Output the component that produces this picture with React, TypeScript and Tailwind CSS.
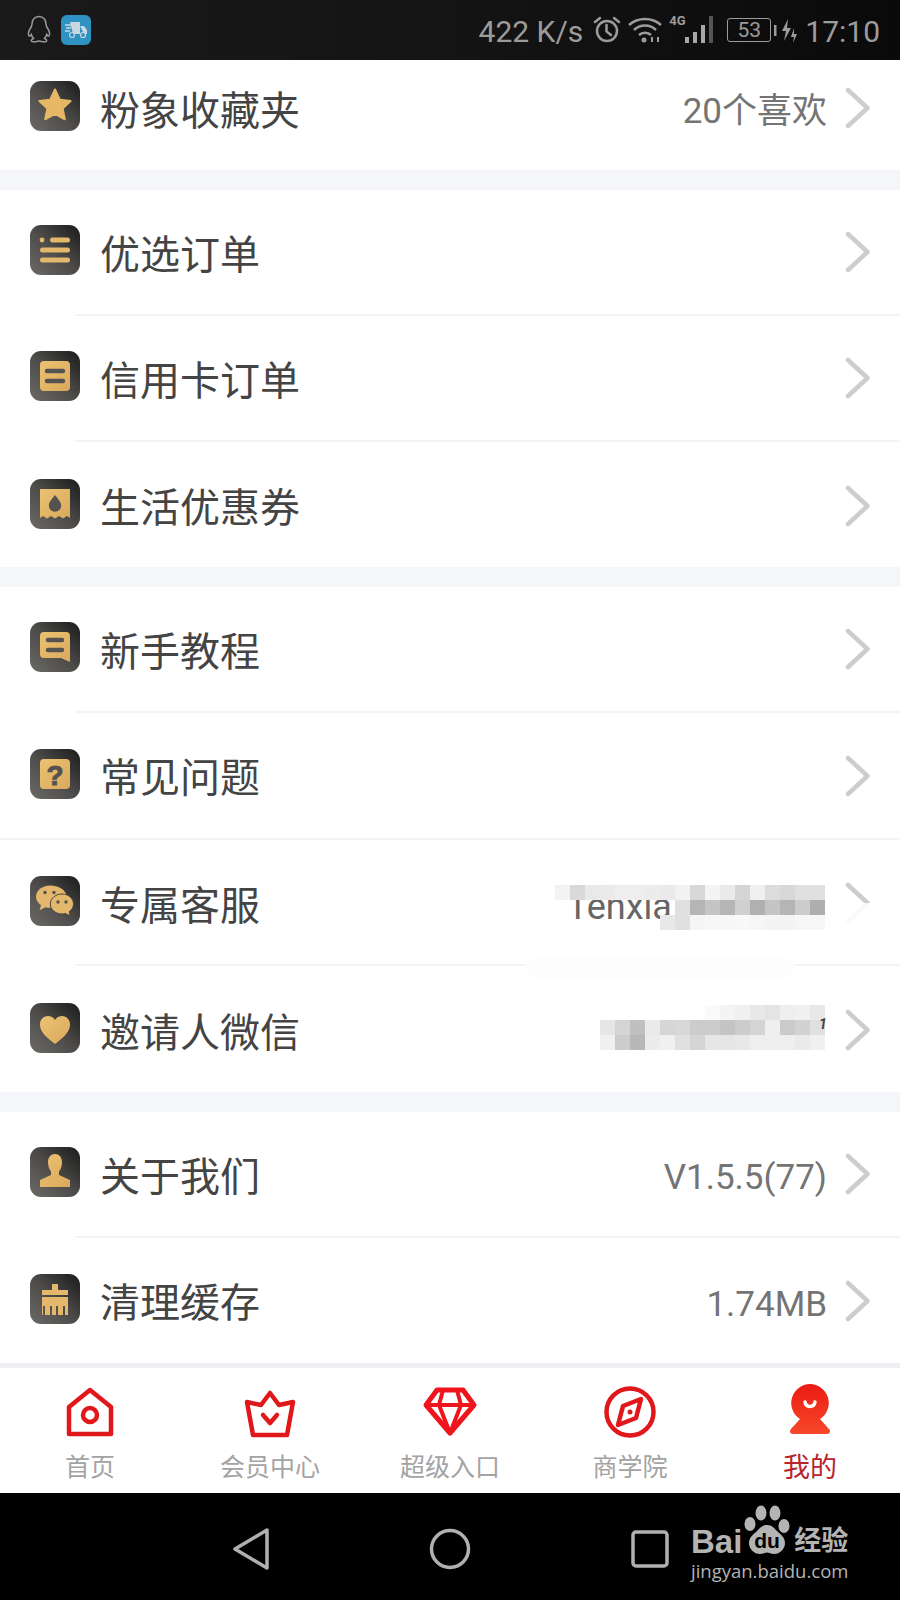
import type { ReactNode } from "react";

const FONT = "[font-family:Roboto,'Noto_Sans_CJK_SC',sans-serif]";
const GOLD = "url(#gold)";
const DARK = "#55534f";

function IconBox({ children }: { children: ReactNode }) {
  return (
    <div className="h-[50px] w-[50px] shrink-0 overflow-hidden rounded-[11px] bg-gradient-to-tr from-[#6b6a66] via-[#4c4b49] to-[#1b1b1b]">
      <svg width="50" height="50" viewBox="0 0 50 50">
        <defs>
          <linearGradient id="gold" x1="0" y1="0" x2="1" y2="1">
            <stop offset="0" stopColor="#ecc272" />
            <stop offset="1" stopColor="#d9a95c" />
          </linearGradient>
        </defs>
        {children}
      </svg>
    </div>
  );
}

const icons: Record<string, ReactNode> = {
  star: (
    <path
      d="M25 8.500l4.800 10.200 10.800 1.300-8 7.400 2.200 10.900-9.800-5.500-9.800 5.500 2.200-10.900-8-7.400 10.800-1.300z"
      fill="#e6b866"
      stroke="#e6b866"
      strokeWidth="2"
      strokeLinejoin="round"
    />
  ),
  list: (
    <g stroke="#e3b76c" strokeWidth="5" strokeLinecap="round">
      <circle cx="12" cy="15" r="2.400" fill="#e3b76c" stroke="none" />
      <path d="M22.500 15H37.500M12.500 25H37.500M12.500 35H37.500" />
    </g>
  ),
  card: (
    <g>
      <rect x="10" y="10" width="30" height="30" rx="4" fill={GOLD} />
      <path d="M17 20H33M17 30H33" stroke={DARK} strokeWidth="4.500" strokeLinecap="round" />
    </g>
  ),
  coupon: (
    <g>
      <path d="M10 10H40V39L37 37 33 39.500 29 37 25 39.500 21 37 17 39.500 13 37 10 39z" fill={GOLD} />
      <path d="M25 16c3 4 6.200 7 6.200 10.500a6.200 6.200 0 0 1-12.400 0C18.800 23 22 20 25 16z" fill={DARK} />
    </g>
  ),
  chat: (
    <g>
      <path d="M14 10H36a4 4 0 0 1 4 4V40L31 36H14a4 4 0 0 1-4-4V14a4 4 0 0 1 4-4z" fill={GOLD} />
      <path d="M18 18H32M18 28H32" stroke={DARK} strokeWidth="4.500" strokeLinecap="round" />
    </g>
  ),
  question: (
    <g>
      <rect x="10" y="10" width="30" height="30" rx="4" fill={GOLD} />
      <text x="25" y="35.500" textAnchor="middle" fontSize="28" fontWeight="700" fill={DARK} stroke={DARK} strokeWidth="1" fontFamily="'Liberation Sans',sans-serif">
        ?
      </text>
    </g>
  ),
  wechat: (
    <g>
      <path d="M20 9.500c-8 0-14 5.200-14 11.200 0 3.600 2 6.500 5 8.500l-1.500 5 6-3c2 .5 4 .8 6 .5L36 18C34 13 28 9.500 20 9.500z" fill="#e3b76c" />
      <circle cx="15" cy="16.500" r="1.700" fill={DARK} />
      <circle cx="24" cy="16.500" r="1.700" fill={DARK} />
      <path d="M32 18c-6.500 0-11.700 4.500-11.700 10s5.200 10 11.700 10c1.500 0 2.500-.2 3.500-.5L40 40l-.7-4.400C42 33.700 43.500 31 43.500 28c0-5.500-5-10-11.500-10z" fill="#e3b76c" stroke="#4a4946" strokeWidth="1" />
      <circle cx="28" cy="26" r="1.700" fill={DARK} />
      <circle cx="36" cy="26" r="1.700" fill={DARK} />
    </g>
  ),
  heart: (
    <path
      d="M25 41C16 34 10 29 10 21.500 10 16 14 13 18 13c3 0 5.500 1.500 7 4 1.500-2.500 4-4 7-4 4 0 8 3 8 8.500C40 29 34 34 25 41z"
      fill={GOLD}
    />
  ),
  user: (
    <path
      d="M18 15c0-5 3-8 7-8s7 3 7 8c0 4-1 7-3 9.500v3.500l11 5v7H10v-7l11-5v-3.500c-2-2.500-3-5.500-3-9.500z"
      fill={GOLD}
    />
  ),
  brush: (
    <g fill="#e3b76c">
      <path d="M22 10H28V16H38V21H12V16H22z" />
      <path d="M12 23H38V41H35V32H33V41H28V32H26V41H22V32H20V41H15V32H13V41H12z" />
    </g>
  ),
};

function Chevron() {
  return (
    <svg width="26" height="42" viewBox="0 0 26 42" className="mt-[4px] shrink-0">
      <path d="M3 3L22.500 21 3 39" fill="none" stroke="#cdcdcd" strokeWidth="4.500" strokeLinecap="round" strokeLinejoin="round" />
    </svg>
  );
}

type RowProps = {
  icon: string;
  title: string;
  value?: string;
  height: number;
  line?: "inset" | "full";
  lift?: number;
  children?: ReactNode;
};

function Row({ icon, title, value, height, line, lift = 3, children }: RowProps) {
  return (
    <div className="relative flex items-center bg-white pr-[29px] pl-[30px]" style={{ height, paddingBottom: lift * 2 }}>
      <IconBox>{icons[icon]}</IconBox>
      <span className="ml-[20px] flex-1 pt-[11px] text-[40px] leading-none text-[#444444]">{title}</span>
      {value && <span className="mr-[18px] pt-[11px] text-[35px] leading-none text-[#747474]">{value}</span>}
      <Chevron />
      {line === "inset" && <div className="absolute right-0 bottom-0 left-[75px] h-[2px] bg-[#f4f4f6]" />}
      {line === "full" && <div className="absolute right-0 bottom-0 left-0 h-[2px] bg-[#f4f4f6]" />}
      {children}
    </div>
  );
}

// "-" leaves the cell clear so the text under it shows through
const blur1 = [
  ["f3", "d9", "e9", "ea", "ee", "ee", "ec", "ea", "f2", "d8", "f4", "ea", "d5", "f0", "dc", "d8", "e0", "e0"],
  ["-", "-", "-", "-", "-", "-", "-", "-", "e0", "b5", "c5", "b5", "d0", "b0", "c5", "b5", "cc", "ae"],
  ["-", "-", "-", "-", "-", "-", "-", "e8", "e0", "f5", "f7", "f7", "f8", "f6", "f4", "f4", "f6", "f6"],
];

const blur2 = [
  ["ff", "ff", "ff", "ff", "ff", "ff", "ff", "fa", "f4", "f0", "e8", "e4", "ee", "f0", "e8"],
  ["e6", "d4", "c0", "ea", "d6", "d8", "cc", "cc", "c4", "cc", "d4", "ee", "ca", "d2", "e0"],
  ["f0", "cc", "b8", "ec", "f0", "e0", "d4", "e6", "e6", "e8", "ee", "ee", "ee", "ea", "f0"],
];

function Mosaic({ rows, className }: { rows: string[][]; className: string }) {
  return (
    <div className={className}>
      {rows.map((row, i) => (
        <div key={i} className="flex">
          {row.map((c, j) => (
            <div key={j} className="h-[15px] w-[15px]" style={{ backgroundColor: c === "-" ? "transparent" : `#${c}${c}${c}` }} />
          ))}
        </div>
      ))}
    </div>
  );
}

function StatusBar() {
  return (
    <div className="flex h-[60px] shrink-0 items-center bg-gradient-to-r from-[#1a1a1a] via-[#141414] to-[#0a0a0a] pr-[20px] pl-[27px] text-[#9c9c9c]">
      <svg width="24" height="30" viewBox="0 0 24 30" fill="none" stroke="#9a9a9a" strokeWidth="1.500">
        <path d="M12 1.500c-4.500 0-7 3.500-7 7.500 0 2-.6 3-2 5-1.500 2.500-2.200 6-1 7 .7.400 1.600-.5 2.300-1.500.4 1.700 1.400 3 2.200 4-1 .4-2.500 1-2.200 2.300.3 1.400 3.700 1.200 5.200.7 1-.4 1.500-.6 2.500-.6s1.500.2 2.500.6c1.500.5 4.900.7 5.200-.7.300-1.300-1.200-1.900-2.200-2.300.8-1 1.800-2.300 2.200-4 .7 1 1.600 1.900 2.300 1.500 1.200-1 .5-4.500-1-7-1.400-2-2-3-2-5 0-4-2.500-7.500-7-7.500z" />
      </svg>
      <div className="ml-[10px] flex h-[30px] w-[30px] items-center justify-center rounded-[6px] bg-[#2f92c2]">
        <svg width="24" height="18" viewBox="0 0 24 18">
          <path d="M6 1H16V13H9M16 5H20L23 9V13H20" fill="#c8d8e0" />
          <path d="M1 4H7M2 7H7M1 10H6" stroke="#c8d8e0" strokeWidth="1.500" />
          <circle cx="8" cy="14" r="2.500" fill="#2f92c2" stroke="#c8d8e0" strokeWidth="1.200" />
          <circle cx="19" cy="14" r="2.500" fill="#2f92c2" stroke="#c8d8e0" strokeWidth="1.200" />
        </svg>
      </div>
      <div className="ml-auto flex items-center">
        <span className="mt-[4px] text-[30px] leading-none [font-family:Roboto,sans-serif]">422 K/s</span>
        <svg width="30" height="30" viewBox="0 0 30 30" className="ml-[9px]" fill="none" stroke="#9c9c9c" strokeWidth="2.500">
          <circle cx="15" cy="16" r="10" />
          <path d="M14.500 10V16.500L19 20M3 7L8 3M27 7L22 3" strokeLinecap="round" />
        </svg>
        <svg width="36" height="28" viewBox="0 0 36 28" className="ml-[5px]" fill="none" stroke="#9c9c9c" strokeWidth="2.500">
          <path d="M2 9C11 1 25 1 34 9M7 14C13 8 23 8 29 14M12 19C15 16 21 16 24 19" />
          <circle cx="17" cy="24" r="2.500" fill="#9c9c9c" stroke="none" />
          <path d="M25 26V21M31 21V26" strokeWidth="2" />
        </svg>
        <div className="relative ml-[6px] h-[30px] w-[46px]">
          <span className="absolute top-[-1px] left-0 text-[13px] leading-none font-bold [font-family:Roboto,sans-serif]">4G</span>
          <svg width="30" height="30" viewBox="0 0 30 30" className="absolute top-0 left-[16px]">
            <rect x="0" y="22" width="4" height="6" fill="#a8a8a8" />
            <rect x="8" y="17" width="4" height="11" fill="#a8a8a8" />
            <rect x="16" y="10" width="4" height="18" fill="#a8a8a8" />
            <rect x="24" y="1" width="4" height="27" fill="#555" />
          </svg>
        </div>
        <div className="ml-[12px] flex h-[24px] w-[44px] items-center justify-center rounded-[3px] border border-[#9c9c9c] text-[21px] leading-none [font-family:Roboto,sans-serif]">
          53
        </div>
        <svg width="26" height="30" viewBox="0 0 26 30" className="ml-[2px]" fill="#9c9c9c">
          <rect x="1" y="10" width="2.500" height="11" />
          <path d="M15 4L9 16H13L11 26 18 13H14z" />
          <path d="M21 13L18 22H21L20 28 24 19H21z" />
        </svg>
        <span className="mt-[4px] ml-[6px] text-[30px] leading-none [font-family:Roboto,sans-serif]">17:10</span>
      </div>
    </div>
  );
}

const RED = "#e0181c";

const tabs: { label: string; active?: boolean; icon: ReactNode }[] = [
  {
    label: "首页",
    icon: (
      <g fill="none" stroke={RED} strokeWidth="4.500" strokeLinejoin="round">
        <path d="M27 5L48 22V49H6V22z" />
        <circle cx="27" cy="30" r="7" />
      </g>
    ),
  },
  {
    label: "会员中心",
    icon: (
      <g fill="none" stroke={RED} strokeWidth="4.500" strokeLinejoin="round" strokeLinecap="round">
        <path d="M27 8L36 20 50 17 44 50H10L4 17 18 20z" />
        <path d="M20 30L27 38 34 30" />
      </g>
    ),
  },
  {
    label: "超级入口",
    icon: (
      <g fill="none" stroke="#f0141c" strokeWidth="5" strokeLinejoin="round">
        <path d="M14 5H40L51 20 27 48 3 20z" />
        <path d="M3 20H51M20 5L16 20 27 48 38 20 34 5" strokeWidth="4" />
      </g>
    ),
  },
  {
    label: "商学院",
    icon: (
      <g>
        <circle cx="27" cy="27" r="23.500" fill="none" stroke={RED} strokeWidth="4.500" />
        <path d="M38 14L33 33 15 40 20 21z" fill="none" stroke={RED} strokeWidth="4.500" strokeLinejoin="round" />
        <circle cx="27" cy="27" r="2.500" fill={RED} />
      </g>
    ),
  },
  {
    label: "我的",
    active: true,
    icon: (
      <g>
        <defs>
          <linearGradient id="me" x1="0" y1="0" x2="0" y2="1">
            <stop offset="0" stopColor="#ec1a14" />
            <stop offset="1" stopColor="#f6492a" />
          </linearGradient>
        </defs>
        <path d="M27 -1a19 19 0 0 1 10 35l9 10c2 2 1 5-2 5H10c-3 0-4-3-2-5l9-10A19 19 0 0 1 27 -1z" fill="url(#me)" />
        <path d="M22 17c1 6 9 6 10 0" fill="none" stroke="#fff" strokeWidth="3.500" strokeLinecap="round" />
      </g>
    ),
  },
];

function TabBar() {
  return (
    <div className="flex h-[130px] shrink-0 border-t-[5px] border-[#eef0f3] bg-white">
      {tabs.map((t) => (
        <div key={t.label} className="flex flex-1 flex-col items-center pt-[17px]">
          <svg width="54" height="54" viewBox="0 0 54 54" className="overflow-visible">
            {t.icon}
          </svg>
          <span className={`mt-[14px] leading-[30px] ${t.active ? "text-[27px] text-[#b8242c]" : "text-[25px] text-[#a3a3a3]"}`}>{t.label}</span>
        </div>
      ))}
    </div>
  );
}

function NavBar() {
  return (
    <div className="relative flex h-[107px] shrink-0 items-start bg-black pt-[35px] pl-[232px]">
      <svg width="38" height="42" viewBox="0 0 38 42" fill="none" stroke="#b0b0b0" strokeWidth="3.500" strokeLinejoin="round">
        <path d="M35 2V40L3 21z" />
      </svg>
      <svg width="42" height="42" viewBox="0 0 42 42" fill="none" stroke="#b0b0b0" strokeWidth="3.500" className="ml-[159px]">
        <circle cx="21" cy="21" r="18.500" />
      </svg>
      <svg width="38" height="38" viewBox="0 0 38 38" fill="none" stroke="#b0b0b0" strokeWidth="3.500" className="mt-[2px] ml-[160px]">
        <rect x="2" y="2" width="34" height="34" rx="3" />
      </svg>
      <div className="absolute top-[12px] left-[691px] flex w-[170px] flex-col text-[#b4b4b4]">
        <div className="flex items-end">
          <span className="text-[33px] leading-[27px] font-bold [font-family:'Liberation_Sans',sans-serif]">Bai</span>
          <svg width="48" height="50" viewBox="0 0 48 50" fill="#b4b4b4" className="ml-[1px]">
            <ellipse cx="18" cy="8" rx="5.500" ry="7.500" />
            <ellipse cx="32" cy="8" rx="5.500" ry="7.500" />
            <ellipse cx="7" cy="19" rx="5.500" ry="7" />
            <ellipse cx="41" cy="21" rx="5.500" ry="7" />
            <path d="M24 20c5 0 7 3 10 6s8 6 8 12-5 11-11 11c-3 0-5-1.500-7-1.500S20 49 17 49c-6 0-11-5-11-11s5-9 8-12 5-6 10-6z" />
            <text x="24" y="43" textAnchor="middle" fontSize="21" fontWeight="700" fill="#000" fontFamily="'Liberation Sans',sans-serif">du</text>
          </svg>
          <span className="ml-[3px] text-[27px] leading-[27px] font-bold">经验</span>
        </div>
        <span className="mt-[7px] text-[18.500px] leading-[18px] [font-family:'Open_Sans',sans-serif]">jingyan.baidu.com</span>
      </div>
    </div>
  );
}

export default function App() {
  return (
    <div className={`flex h-[1600px] w-[900px] flex-col overflow-hidden bg-[#f5f6fa] ${FONT}`}>
      <StatusBar />
      <Row icon="star" title="粉象收藏夹" value="20个喜欢" height={110} lift={9} />
      <div className="mt-[20px]">
        <Row icon="list" title="优选订单" height={126} line="inset" />
        <Row icon="card" title="信用卡订单" height={126} line="inset" />
        <Row icon="coupon" title="生活优惠券" height={125} lift={1} />
      </div>
      <div className="mt-[20px]">
        <Row icon="chat" title="新手教程" height={126} line="inset" />
        <Row icon="question" title="常见问题" height={127} line="full" />
        <Row icon="wechat" title="专属客服" height={126} line="inset" lift={2}>
          <span className="absolute top-[49px] left-[567px] text-[36px] leading-none text-[#666]">Tenxia</span>
          <div className="absolute top-[63px] left-[825px] h-[30px] w-[50px] bg-white/90" />
          <div className="absolute top-[118px] left-[525px] z-10 h-[20px] w-[270px] rounded-[10px] bg-[#fdfdfd]" />
          <Mosaic rows={blur1} className="absolute top-[45px] left-[555px]" />
        </Row>
        <Row icon="heart" title="邀请人微信" height={126} lift={1}>
          <Mosaic rows={blur2} className="absolute top-[39px] left-[600px]" />
          <span className="absolute top-[51px] left-[819px] text-[14px] leading-none font-bold text-[#444] italic">1</span>
        </Row>
      </div>
      <div className="mt-[20px]">
        <Row icon="user" title="关于我们" value="V1.5.5(77)" height={126} line="inset" />
        <Row icon="brush" title="清理缓存" value="1.74MB" height={125} lift={2} />
      </div>
      <TabBar />
      <NavBar />
    </div>
  );
}
